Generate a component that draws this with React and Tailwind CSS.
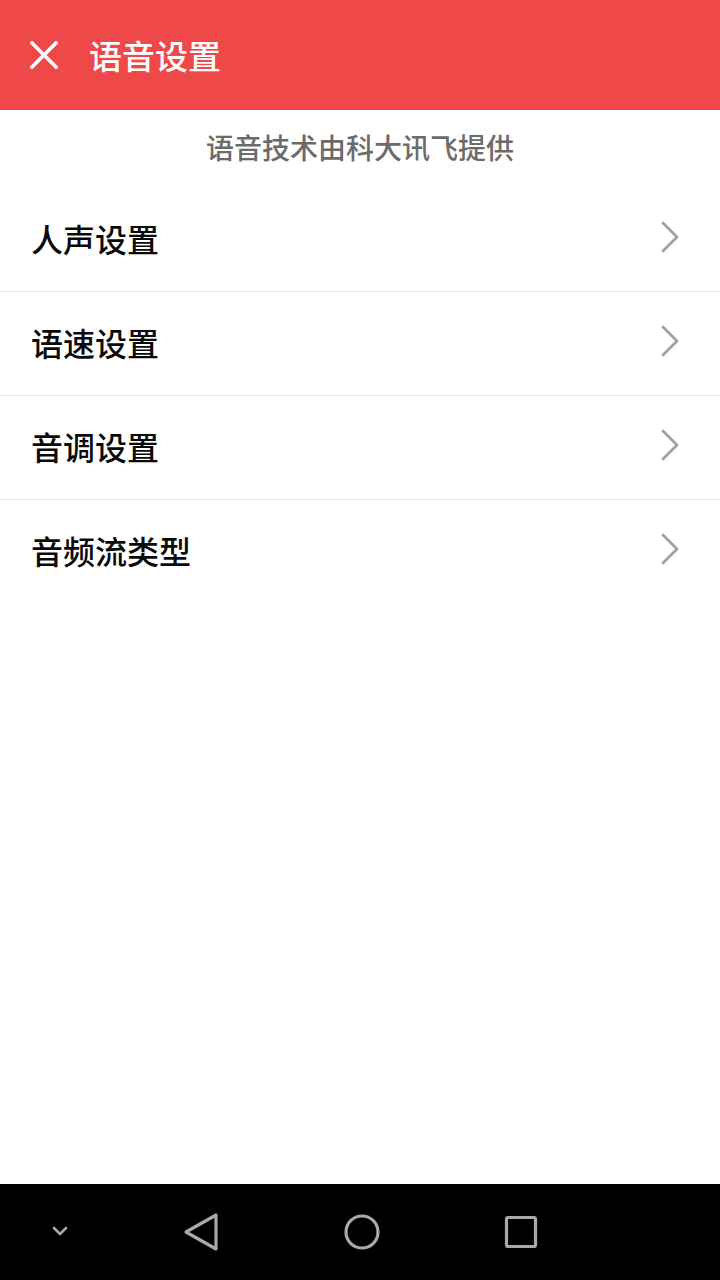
import React from 'react';

const items = ['人声设置', '语速设置', '音调设置', '音频流类型'];

const Chevron = () => (
  <svg width="20" height="34" viewBox="0 0 20 34" fill="none">
    <path d="M3 3 L17 17 L3 31" stroke="#9e9e9e" strokeWidth="2.6" strokeLinecap="round" strokeLinejoin="round" />
  </svg>
);

export default function App() {
  return (
    <div
      className="flex h-[1280px] w-[720px] flex-col bg-white"
      style={{ fontFamily: '"Noto Sans CJK SC", "Noto Sans", sans-serif' }}
    >
      <header className="flex h-[110px] shrink-0 items-center bg-[#ef4848] pl-[30px]">
        <svg width="28" height="28" viewBox="0 0 28 28">
          <path d="M2 2 L26 26 M26 2 L2 26" stroke="#fff" strokeWidth="3.6" strokeLinecap="square" />
        </svg>
        <h1 className="ml-[31px] text-[33px] font-medium leading-none text-white">语音设置</h1>
      </header>

      <p className="flex h-[78px] shrink-0 items-center justify-center pb-[4px] text-[28px] font-medium leading-none text-[#6b6b6b]">
        语音技术由科大讯飞提供
      </p>

      <ul className="flex flex-col">
        {items.map((label, i) => (
          <li
            key={label}
            className={`flex h-[104px] items-center justify-between pl-[31px] pr-[40px] ${
              i < items.length - 1 ? 'border-b border-[#e6e6e6]' : ''
            }`}
          >
            <span className="pb-[4px] text-[32px] font-medium leading-none text-[#0a0a0a]">{label}</span>
            <span className="pb-[6px]">
              <Chevron />
            </span>
          </li>
        ))}
      </ul>

      <div className="flex-1" />

      <nav className="relative h-[96px] shrink-0 bg-black">
        <svg className="absolute left-[50px] top-[41px]" width="20" height="12" viewBox="0 0 20 12">
          <path d="M4 3 L10 9 L16 3" stroke="#a8a8a8" strokeWidth="2.6" fill="none" strokeLinecap="round" strokeLinejoin="round" />
        </svg>
        <svg className="absolute left-[183px] top-[28px]" width="36" height="40" viewBox="0 0 36 40">
          <path d="M33 3 L33 37 L3 20 Z" stroke="#a8a8a8" strokeWidth="3.2" fill="none" strokeLinejoin="round" />
        </svg>
        <svg className="absolute left-[343px] top-[29px]" width="38" height="38" viewBox="0 0 38 38">
          <circle cx="19" cy="19" r="16" stroke="#a8a8a8" strokeWidth="3.2" fill="none" />
        </svg>
        <svg className="absolute left-[503px] top-[30px]" width="36" height="36" viewBox="0 0 36 36">
          <rect x="3.5" y="3.5" width="29" height="29" rx="1.5" stroke="#a8a8a8" strokeWidth="3.2" fill="none" />
        </svg>
      </nav>
    </div>
  );
}
